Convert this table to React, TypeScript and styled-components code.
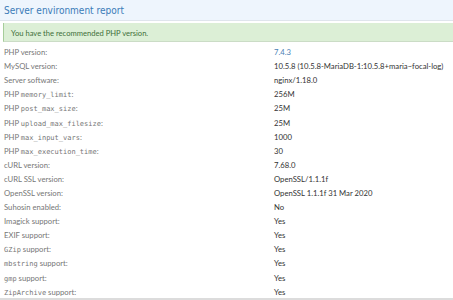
import React from "react";
import styled, { createGlobalStyle } from "styled-components";

const Global = createGlobalStyle`
  html, body { margin: 0; padding: 0; background: #fff; }
  body { font-family: Lato, "Noto Sans", sans-serif; }
`;

const Block = styled.div`
  width: 453px;
  height: 300px;
  overflow: hidden;
  display: flex;
  flex-direction: column;
  border-bottom: 2px solid #dcdcdc;
  box-sizing: border-box;
`;

const Header = styled.h2`
  margin: 0;
  height: 21px;
  box-sizing: border-box;
  padding: 2px 4px 0;
  font-family: "DejaVu Sans Condensed", "DejaVu Sans", sans-serif;
  font-stretch: condensed;
  font-size: 10px;
  font-weight: 400;
  line-height: 18px;
  color: #3a7bb8;
  background: #eef5fd;
  border-bottom: 1px solid #dfe5ec;
`;

const Body = styled.div`
  padding: 2px 0 0 3px;
  display: flex;
  flex-direction: column;
`;

const Notice = styled.div`
  height: 19px;
  box-sizing: border-box;
  display: flex;
  align-items: center;
  padding: 1px 0 0 7px;
  font-size: 7.6px;
  color: #3f6f3a;
  background: #dcefd6;
  border-left: 1px solid #a6cd9a;
  border-bottom: 1px solid #cbdcc6;
`;

const Table = styled.dl`
  margin: 3px 0 0;
  padding: 0 0 0 1px;
  display: grid;
  grid-template-columns: 270px 1fr;
  grid-auto-rows: 14.1px;
  align-items: center;
  font-size: 7.7px;
`;

const Label = styled.dt`
  margin: 0;
  color: #767676;
  white-space: nowrap;
`;

const Value = styled.dd<{ $link?: boolean }>`
  margin: 0;
  color: ${(p) => (p.$link ? "#4a7fb5" : "#333333")};
  white-space: nowrap;
`;

const Code = styled.code`
  font-family: "DejaVu Sans Mono", monospace;
  font-size: 7px;
  color: #767676;
`;

type Row = { pre?: string; code?: string; post?: string; value: string; link?: boolean };

const rows: Row[] = [
  { pre: "PHP version:", value: "7.4.3", link: true },
  { pre: "MySQL version:", value: "10.5.8 (10.5.8-MariaDB-1:10.5.8+maria~focal-log)" },
  { pre: "Server software:", value: "nginx/1.18.0" },
  { pre: "PHP ", code: "memory_limit", post: ":", value: "256M" },
  { pre: "PHP ", code: "post_max_size", post: ":", value: "25M" },
  { pre: "PHP ", code: "upload_max_filesize", post: ":", value: "25M" },
  { pre: "PHP ", code: "max_input_vars", post: ":", value: "1000" },
  { pre: "PHP ", code: "max_execution_time", post: ":", value: "30" },
  { pre: "cURL version:", value: "7.68.0" },
  { pre: "cURL SSL version:", value: "OpenSSL/1.1.1f" },
  { pre: "OpenSSL version:", value: "OpenSSL 1.1.1f 31 Mar 2020" },
  { pre: "Suhosin enabled:", value: "No" },
  { pre: "Imagick support:", value: "Yes" },
  { pre: "EXIF support:", value: "Yes" },
  { code: "GZip", post: " support:", value: "Yes" },
  { code: "mbstring", post: " support:", value: "Yes" },
  { code: "gmp", post: " support:", value: "Yes" },
  { code: "ZipArchive", post: " support:", value: "Yes" },
];

export default function App() {
  return (
    <>
      <Global />
      <Block>
        <Header>Server environment report</Header>
        <Body>
          <Notice>You have the recommended PHP version.</Notice>
          <Table>
            {rows.map((r, i) => (
              <React.Fragment key={i}>
                <Label>
                  {r.pre}
                  {r.code && <Code>{r.code}</Code>}
                  {r.post}
                </Label>
                <Value $link={r.link}>{r.value}</Value>
              </React.Fragment>
            ))}
          </Table>
        </Body>
      </Block>
    </>
  );
}
